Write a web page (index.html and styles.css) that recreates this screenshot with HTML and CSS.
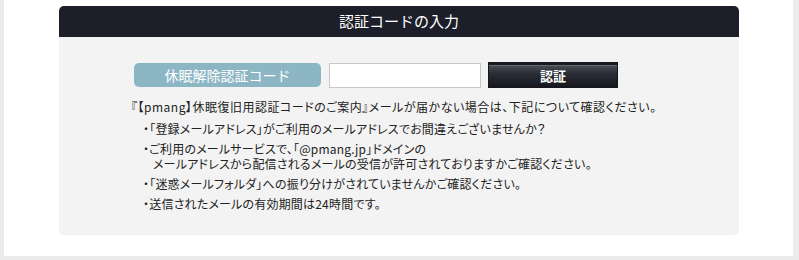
FILE: index.html
```html
<!DOCTYPE html>
<html>
<head>
  <meta charset="utf-8">
  <meta name="viewport" content="width=device-width, initial-scale=1">
  <title>認証コードの入力</title>
  <link rel="stylesheet" href="styles.css">
</head>
<body>
<div class="page">
  <div class="panel">
    <h2 class="panelHead">認証コードの入力</h2>
    <div class="panelBody">
      <div class="formRow">
        <label class="codeLabel" for="codeInput">休眠解除認証コード</label>
        <input type="text" id="codeInput" class="codeInput">
        <button class="authBtn">認証</button>
      </div>
      <div class="notes">
        <p>『【pmang】休眠復旧用認証コードのご案内』メールが届かない場合は、下記について確認ください。</p>
        <ul>
          <li>・「登録メールアドレス」がご利用のメールアドレスでお間違えございませんか？</li>
          <li>・ご利用のメールサービスで、「@pmang.jp」ドメインの<br>メールアドレスから配信されるメールの受信が許可されておりますかご確認ください。</li>
          <li>・「迷惑メールフォルダ」への振り分けがされていませんかご確認ください。</li>
          <li>・送信されたメールの有効期間は24時間です。</li>
        </ul>
      </div>
    </div>
  </div>
</div>
</body>
</html>
```

FILE: styles.css
```css
/* 基本 */
body {
  margin: 0;
  background: #ececec;
  font-family: "Noto Sans CJK JP", "Liberation Sans", sans-serif;
  color: #222;
}
.page {
  background: #fff;
  margin: 0 6px 0 4px;
  height: 256px;
  padding-top: 6px;
  box-sizing: border-box;
}
.panel {
  width: 680px;
  margin-left: 55px;
}
.panelHead {
  margin: 0;
  height: 31px;
  line-height: 29px;
  background: #1c1e29;
  color: #fff;
  font-size: 15px;
  font-weight: normal;
  text-align: center;
  border-radius: 5px 5px 0 0;
}
.panelBody {
  background: #f3f3f3;
  height: 198px;
  border-radius: 0 0 5px 5px;
  padding: 25px 0 0 72px;
  box-sizing: border-box;
}
.formRow {
  display: flex;
  align-items: center;
  margin-left: 3px;
}
.codeLabel {
  width: 187px;
  height: 24px;
  line-height: 24px;
  background: #8db6c5;
  color: #fff;
  font-size: 14px;
  text-align: center;
  border-radius: 5px;
}
.codeInput {
  width: 152px;
  height: 25px;
  margin-left: 8px;
  border: 1px solid #c8c8c8;
  background: #fff;
  box-sizing: border-box;
  padding: 0 4px;
}
.authBtn {
  width: 130px;
  height: 26px;
  margin-left: 7px;
  border: 1px solid #15161c;
  background: linear-gradient(#54565f, #2a2c35 45%, #16171e);
  box-shadow: inset 0 2px 0 #1a1b22, inset 0 3px 0 rgba(255,255,255,0.15);
  color: #fff;
  font-family: "Noto Sans CJK JP", sans-serif;
  font-size: 13px;
  font-weight: bold;
  padding: 0;
}
.notes {
  margin-top: 11px;
  font-size: 12px;
  line-height: 15px;
  color: #222;
  font-feature-settings: "palt";
}
.notes p {
  margin: 0 0 7px;
  letter-spacing: 0.5px;
}
.notes ul {
  list-style: none;
  margin: 0;
  padding: 0 0 0 22px;
}
.notes li {
  text-indent: -10px;
  margin-bottom: 5px;
  letter-spacing: 0.2px;
}
```
